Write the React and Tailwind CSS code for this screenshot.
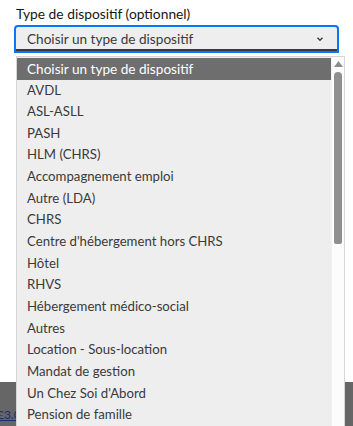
import React from "react";

const options = [
  "AVDL",
  "ASL-ASLL",
  "PASH",
  "HLM (CHRS)",
  "Accompagnement emploi",
  "Autre (LDA)",
  "CHRS",
  "Centre d'hébergement hors CHRS",
  "Hôtel",
  "RHVS",
  "Hébergement médico-social",
  "Autres",
  "Location - Sous-location",
  "Mandat de gestion",
  "Un Chez Soi d'Abord",
  "Pension de famille",
];

export default function App() {
  return (
    <div
      className="relative w-[353px] h-[426px] overflow-hidden bg-white flex flex-col"
      style={{ fontFamily: "Lato, 'Noto Sans', sans-serif" }}
    >
      <div className="flex-1 px-[14px] pt-[6px]">
        <div className="pl-[2px] text-[13.8px] leading-[16px] text-[#161616]">
          Type de dispositif (optionnel)
        </div>
        <div className="mt-[3px] h-[28px] rounded-t-[4px] border-2 border-[#0a76f6] bg-[#eeeeee] flex items-center justify-between pl-[11px] pr-[12px] shadow-[inset_0_-2px_0_#3a3a3a]">
          <span className="text-[13.6px] text-[#3a3a3a]">Choisir un type de dispositif</span>
          <svg width="10" height="10" viewBox="0 0 10 10" className="text-[#3a3a3a]">
            <path d="M2.5 3.8 L5 6.2 L7.5 3.8" fill="none" stroke="currentColor" strokeWidth="1.4" />
          </svg>
        </div>
      </div>
      <div className="h-[44px] bg-[#666666] flex items-end pb-[4px]">
        <span className="ml-[-3px] text-[12px] leading-[14px] text-[#1e2a6e] underline">£3.0</span>
      </div>

      <div className="absolute left-[16px] top-[56px] w-[329px] h-[380px] bg-[#eeeeee] border border-[#d6d6d6] flex">
        <div className="flex-1 pt-[1px]">
          <div className="h-[21.65px] flex items-center pl-[10px] bg-[#6e6e6e] text-white text-[13.6px]">
            Choisir un type de dispositif
          </div>
          {options.map((o) => (
            <div key={o} className="h-[21.65px] flex items-center pl-[10px] text-[13.2px] text-[#3a3a3a]">
              {o}
            </div>
          ))}
        </div>
        <div className="w-[13px] bg-[#fcfcfc] border-l border-[#f0f0f0] flex flex-col items-center pt-[4px]">
          <svg width="9" height="6" viewBox="0 0 9 6">
            <path d="M4.5 0 L9 6 L0 6 Z" fill="#8c8c8c" />
          </svg>
          <div className="mt-[5px] w-[8px] h-[172px] rounded-t-[4px] rounded-b-[2px] bg-[#8f8f8f]" />
        </div>
      </div>
    </div>
  );
}
